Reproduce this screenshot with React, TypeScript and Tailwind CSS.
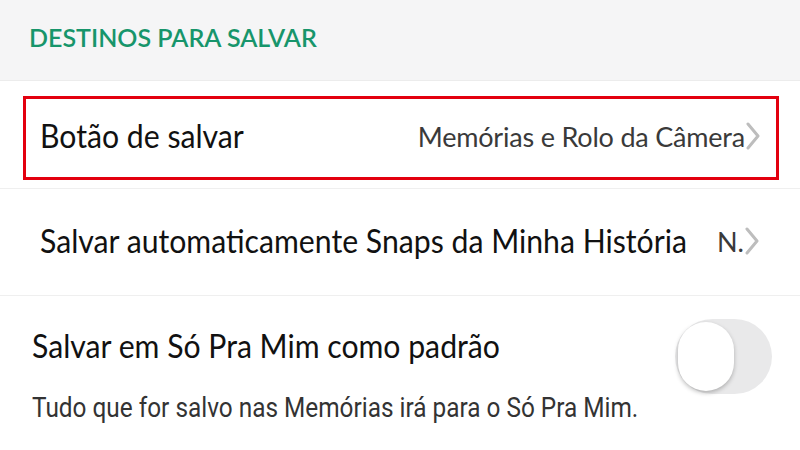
import React from 'react';

function Chevron() {
  return (
    <svg width="16" height="28" viewBox="0 0 16 28" className="shrink-0">
      <path d="M3 2 L13 14 L3 26" fill="none" stroke="#bdbdbd" strokeWidth="3" strokeLinecap="round" strokeLinejoin="round" />
    </svg>
  );
}

function Title({ children }: { children: React.ReactNode }) {
  return (
    <div className="flex-1 min-w-0">
      <span className="inline-block whitespace-nowrap origin-left scale-x-[0.915] text-[33px] leading-none text-[#111]">
        {children}
      </span>
    </div>
  );
}

export default function App() {
  return (
    <div className="w-[800px] h-[450px] bg-white overflow-hidden" style={{ fontFamily: 'Lato, sans-serif' }}>
      {/* section header */}
      <div className="h-[81px] bg-[#f5f5f6] border-b border-[#ececec] flex items-end pb-[30px] pl-[29px]">
        <span className="text-[25px] leading-none font-semibold text-[#17956b]">DESTINOS PARA SALVAR</span>
      </div>

      {/* save button row */}
      <div className="h-[108px] border-b border-[#efefef] pt-[15px] pl-[23px] pr-[21px]">
        <div className="h-[84px] border-[3.5px] border-[#e3000f] flex items-center pl-[14px] pr-[15px] pb-[4px]">
          <Title>Botão de salvar</Title>
          <span className="shrink-0 text-[27px] leading-none text-[#3a3a3a] tracking-[-0.2px]">Memórias e Rolo da Câmera</span>
          <Chevron />
        </div>
      </div>

      {/* auto save row */}
      <div className="h-[107px] border-b border-[#efefef] flex items-center pl-[40px] pr-[40px] pb-[2px]">
        <Title>Salvar automaticamente Snaps da Minha História</Title>
        <span className="shrink-0 text-[27px] leading-none text-[#3a3a3a]">N.</span>
        <Chevron />
      </div>

      {/* only-me row */}
      <div className="flex pl-[32px] pr-[28px] pt-[23px]">
        <div className="flex-1 min-w-0 pt-[10px] flex flex-col">
          <Title>Salvar em Só Pra Mim como padrão</Title>
          <div
            className="mt-[30px] whitespace-nowrap origin-left scale-x-[0.87] text-[28px] leading-none text-[#333]"
            style={{ fontFamily: 'Roboto, sans-serif' }}
          >
            Tudo que for salvo nas Memórias irá para o Só Pra Mim.
          </div>
        </div>
        <div className="shrink-0 w-[97px] h-[75px] rounded-full bg-[#e9e9ea] p-[3px] flex">
          <div className="w-[56px] h-[69px] rounded-full bg-white shadow-[0_2px_4px_rgba(0,0,0,0.25)]" />
        </div>
      </div>
    </div>
  );
}
